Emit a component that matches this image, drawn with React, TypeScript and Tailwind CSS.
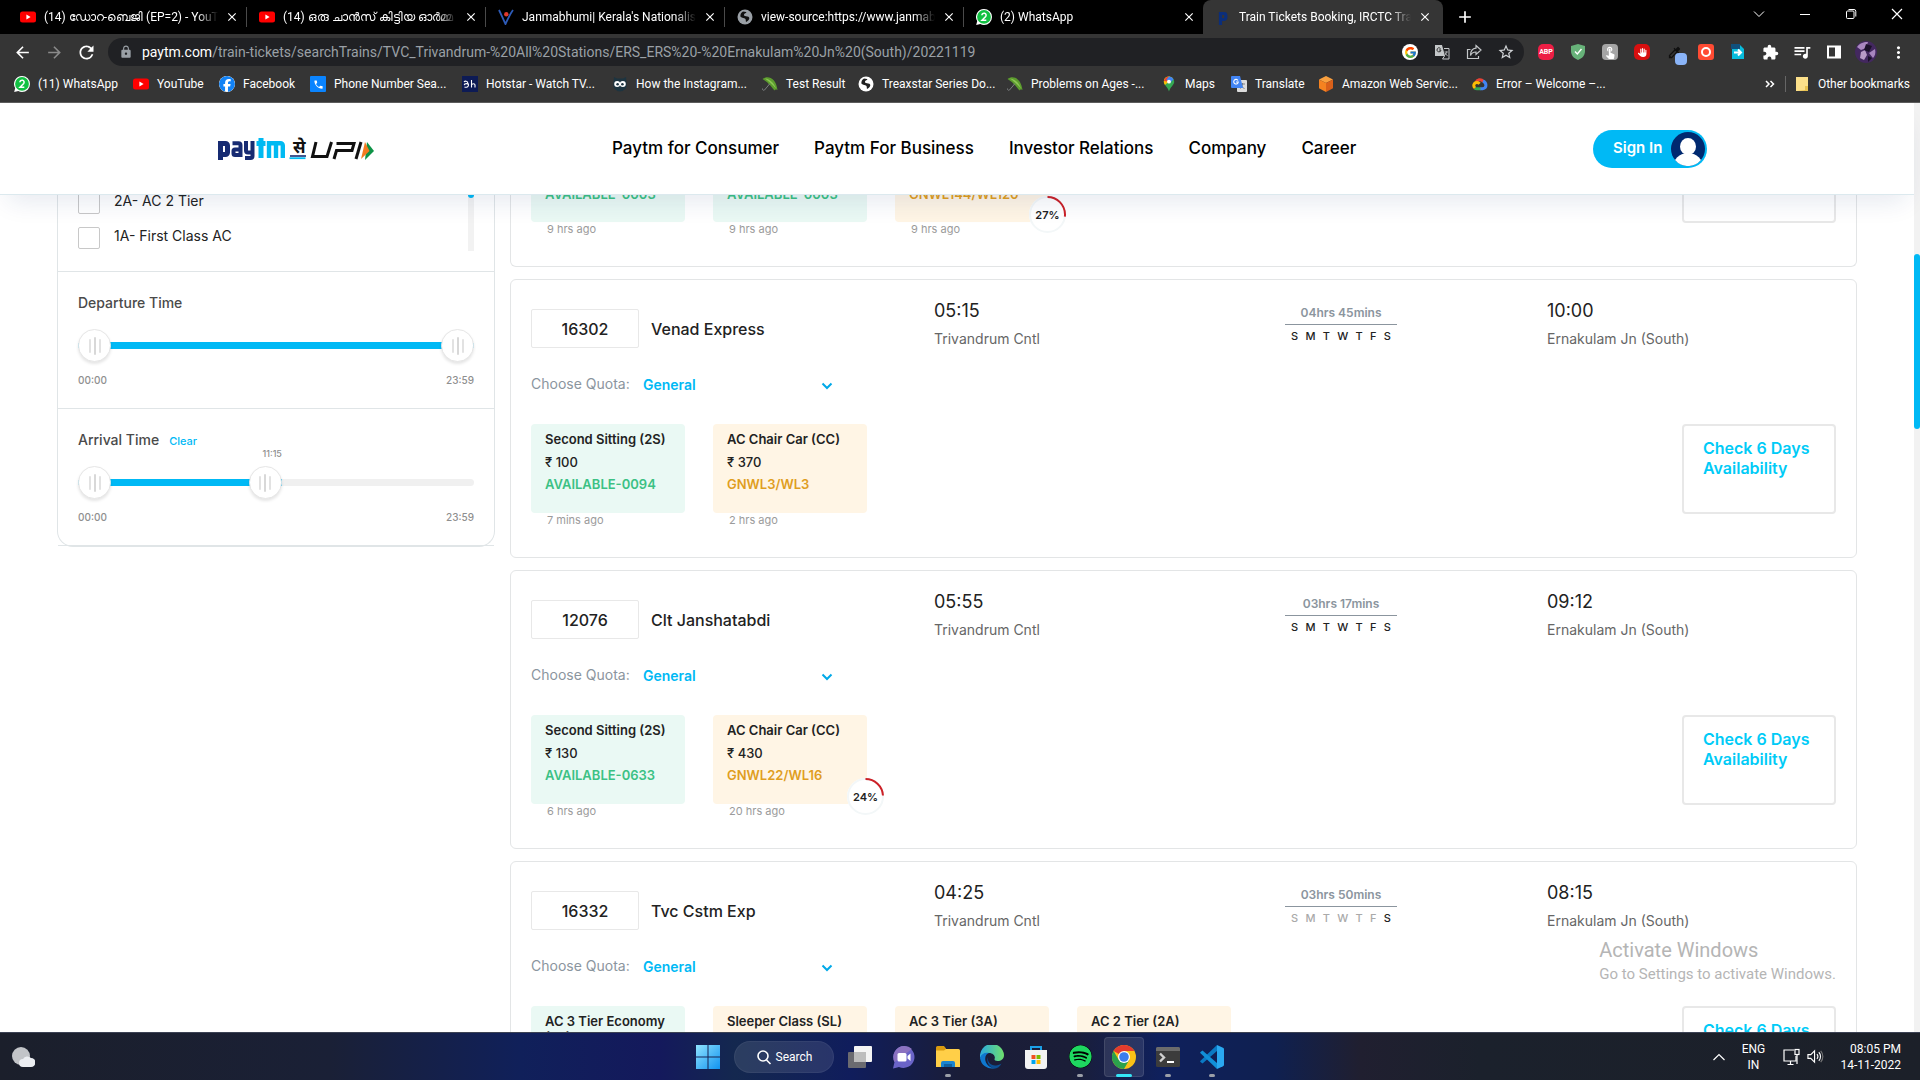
import React from "react";
import { FaFacebook, FaSpotify, FaHand } from "react-icons/fa6";
import { FcGoogle } from "react-icons/fc";
import {
  MdArrowBack,
  MdArrowForward,
  MdRefresh,
  MdLock,
  MdExtension,
  MdOutlineQueueMusic,
  MdTouchApp,
  MdMoreVert,
  MdStarBorder,
  MdAdd,
  MdClose,
  MdPhone,
  MdColorize,
} from "react-icons/md";

/* ---------- Small drawings ---------- */

function WhatsAppIcon() {
  return (
    <svg viewBox="0 0 16 16" className="size-4 shrink-0" aria-hidden="true">
      <path d="M8 0a8 8 0 0 1 0 16c-1.400 0-2.600-.3-3.700-.9L.2 16l1-3.900A8 8 0 0 1 8 0z" fill="#fff" />
      <circle cx="8" cy="7.900" r="6.900" fill="#12c143" />
      <path d="M5.900 6.300a2.100 2.100 0 1 1 3.800 1.200L6 11.300h4.300" fill="none" stroke="#fff" strokeWidth="1.500" />
    </svg>
  );
}

function YouTubeIcon() {
  return (
    <svg viewBox="0 0 16 16" className="size-4 shrink-0" aria-hidden="true">
      <rect x="0" y="2.500" width="16" height="11" rx="2.500" fill="#f00" />
      <path d="M6.400 5.600v4.800L10.600 8z" fill="#fff" />
    </svg>
  );
}

function JanmabhumiIcon() {
  return (
    <svg viewBox="0 0 16 16" className="size-4 shrink-0" aria-hidden="true">
      <path d="M1 1c2 4 4 9 6.500 14C10 10 12 5 15 1" fill="none" stroke="#2d5bb8" strokeWidth="1.800" />
      <circle cx="8.300" cy="5.300" r="2.200" fill="#e03a2c" />
    </svg>
  );
}

function GlobeIcon({ dim }: { dim?: boolean }) {
  return (
    <svg viewBox="0 0 16 16" className="size-4 shrink-0" aria-hidden="true">
      <circle cx="8" cy="8" r="7.500" fill={dim ? "#9aa0a6" : "#fff"} />
      <path
        d="M6 2.500c1.500.3 2.500 0 3.500.8-.6 1.200-2 1-2.500 2.200-.4 1 .8 1.500 2 1.700 1.800.3 3.500.6 3.300 2.300-.3 1.600-1.500 2.600-3.300 3.500-.5-1.200.2-2.300-.8-3.200-1-.8-3-.6-4.700-2C3 6 4 3.500 6 2.500z"
        fill={dim ? "#111" : "#222"}
      />
    </svg>
  );
}

function UmbrellaIcon() {
  return (
    <svg viewBox="0 0 16 16" className="size-4 shrink-0" aria-hidden="true">
      <path d="M.5 3C6-1 14 2 15.500 14c-1.500-.8-2.500-.6-3 .4C10 12 8.500 9 7 8.500 5.500 6 3 5 .5 3z" fill="#5c9c2e" />
      <path d="M3 2.500C8 3 12 7 14 12.500 10 8 7 5.500 3 2.500z" fill="#8cc653" />
      <path d="M8 7.500L2.500 14a1.300 1.300 0 0 1-2-1.500" fill="none" stroke="#7b7f80" strokeWidth="1" />
    </svg>
  );
}

function PhoneTile() {
  return (
    <span className="flex size-4 shrink-0 items-center justify-center rounded-[1px] bg-[#0a84ff] text-white">
      <MdPhone size={11} />
    </span>
  );
}

function HotstarTile() {
  return (
    <svg viewBox="0 0 16 16" className="size-4 shrink-0" aria-hidden="true">
      <rect width="16" height="16" fill="#0d1b55" />
      <path
        d="M2 6c1-1.300 3.500-1 3.500.5M2.200 9.200c.3-2 4-2 4.300-.3.200 1.800-2 2.800-4 2.100M6.500 9c0-1-.5-1.500-1-2.500M9.500 4v7.500M9.500 9c.5-1.700 3.500-1.700 3.500 0v2.500"
        fill="none"
        stroke="#fff"
        strokeWidth="1.100"
      />
    </svg>
  );
}

function OwlIcon() {
  return (
    <svg viewBox="0 0 16 16" className="size-4 shrink-0" aria-hidden="true">
      <path d="M2 1l3 1.500h6L14 1l.8 8A6.800 6.800 0 0 1 8 15.500 6.800 6.800 0 0 1 1.200 9z" fill="#1d3440" />
      <circle cx="5.200" cy="8" r="3" fill="#fff" />
      <circle cx="10.800" cy="8" r="3" fill="#fff" />
      <circle cx="5.600" cy="8.300" r="1.300" fill="#1d3440" />
      <circle cx="10.400" cy="8.300" r="1.300" fill="#1d3440" />
    </svg>
  );
}

function MapsPin() {
  return (
    <svg viewBox="0 0 16 16" className="size-4 shrink-0" aria-hidden="true">
      <path d="M8 .5A5.200 5.200 0 0 1 13.200 5.700c0 3.300-4 5.300-5.200 9.800C6.800 11 2.800 9 2.800 5.700A5.200 5.200 0 0 1 8 .5z" fill="#34a853" />
      <path d="M2.800 5.700c0 1.200.5 2.200 1.200 3.200L11.700 2A5.200 5.200 0 0 0 2.800 5.700z" fill="#fbbc04" />
      <path d="M4 2.400A5.200 5.200 0 0 1 8 .5L6 5.500 3 5C3 4 3.400 3 4 2.400z" fill="#ea4335" />
      <path d="M8 .5a5.200 5.200 0 0 1 4.600 2.800L9 7 5.500 3.500z" fill="#4285f4" />
      <circle cx="8" cy="5.700" r="1.900" fill="#fff" />
    </svg>
  );
}

function TranslateTile() {
  return (
    <svg viewBox="0 0 16 16" className="size-4 shrink-0" aria-hidden="true">
      <rect x="6" y="4" width="10" height="12" rx="1" fill="#dcdcdc" />
      <path d="M9 8h5M11.500 7v1c0 2-1 3.500-2.500 4.500M10 9c.5 1.500 2 3 3.500 3.500" stroke="#70757a" fill="none" strokeWidth=".9" />
      <path d="M1 0h8l3 12H1a1 1 0 0 1-1-1V1a1 1 0 0 1 1-1z" fill="#4285f4" />
      <path d="M7 4.500A2.300 2.300 0 1 0 7.300 6H5" fill="none" stroke="#fff" strokeWidth="1.100" />
    </svg>
  );
}

function AwsCube() {
  return (
    <svg viewBox="0 0 16 16" className="size-4 shrink-0" aria-hidden="true">
      <path d="M8 0l7 3.500L8 7 1 3.500z" fill="#f9a03f" />
      <path d="M1 3.500L8 7v9l-7-3.700z" fill="#f58220" />
      <path d="M15 3.500L8 7v9l7-3.700z" fill="#d9601a" />
    </svg>
  );
}

function CloudIcon() {
  return (
    <svg viewBox="0 0 16 16" className="size-4 shrink-0" aria-hidden="true" fill="none" strokeWidth="3">
      <path d="M4 6.500C5 3.500 9 2.500 11.300 5.500" stroke="#ea4335" />
      <path d="M11 5c3.500 1.500 4.500 7-.5 7.800H8" stroke="#4285f4" />
      <path d="M8.500 12.800H5c-1 0-1.700-.2-2.300-.7" stroke="#34a853" />
      <path d="M3 12C.8 10 1.800 6.500 5 6.500c1.200 0 2 .5 2.600 1.200" stroke="#fbbc04" />
    </svg>
  );
}

function PaytmFavicon() {
  return (
    <svg viewBox="0 0 16 16" className="size-4 shrink-0" aria-hidden="true">
      <path d="M5.500 16V4.500H9a1.800 1.800 0 0 1 1.800 1.800v2.400A1.800 1.800 0 0 1 9 10.500H6" fill="none" stroke="#0b2e7a" strokeWidth="3.200" />
    </svg>
  );
}

/* ---------- Browser chrome ---------- */

const tabs = [
  { title: "(14) ഡോറ-ബെജി (EP=2) - YouTube", icon: <YouTubeIcon /> },
  { title: "(14) ഒരു ചാൻസ് കിട്ടിയ ഓർമ്മ", icon: <YouTubeIcon /> },
  { title: "Janmabhumi| Kerala's Nationalist D", icon: <JanmabhumiIcon /> },
  { title: "view-source:https://www.janmabhumi", icon: <GlobeIcon dim /> },
  { title: "(2) WhatsApp", icon: <WhatsAppIcon /> },
  { title: "Train Tickets Booking, IRCTC Train T", icon: <PaytmFavicon />, active: true },
];

function TabStrip() {
  return (
    <div className="flex h-[34px] items-stretch bg-black pl-2">
      {tabs.map((t, i) => (
        <div
          key={t.title}
          className={
            t.active
              ? "flex w-[240px] items-center rounded-t-lg bg-[#353535] pr-1 pl-3"
              : "flex w-[239px] items-center pl-3"
          }
        >
          {t.icon}
          <span className="ml-2 flex-1 overflow-hidden text-xs whitespace-nowrap text-white [mask-image:linear-gradient(to_right,black_88%,transparent)]">
            {t.title}
          </span>
          <button aria-label={"Close tab " + (i + 1)} className="mx-[7px] text-white">
            <MdClose size={14} />
          </button>
          {!t.active && i < 4 && <span className="h-5 w-px bg-[#4a4a4a]" />}
        </div>
      ))}
      <button aria-label="New tab" className="ml-3 text-white">
        <MdAdd size={20} />
      </button>
      <div className="ml-auto flex h-7 items-center text-white">
        <button aria-label="Search tabs" className="flex w-[46px] justify-center">
          <svg viewBox="0 0 12 12" className="size-3" fill="none" stroke="currentColor">
            <path d="M1 3.500l5 5 5-5" />
          </svg>
        </button>
        <button aria-label="Minimize" className="flex w-[46px] justify-center">
          <svg viewBox="0 0 12 12" className="size-3" fill="none" stroke="currentColor">
            <path d="M1 6.500h10" />
          </svg>
        </button>
        <button aria-label="Restore" className="flex w-[46px] justify-center">
          <svg viewBox="0 0 12 12" className="size-3" fill="none" stroke="currentColor">
            <rect x="1.500" y="3" width="7.500" height="7.500" rx="1" />
            <path d="M3.500 1.500H9a1.800 1.800 0 0 1 1.800 1.800V8.500" />
          </svg>
        </button>
        <button aria-label="Close" className="flex w-[46px] justify-center">
          <svg viewBox="0 0 12 12" className="size-3" fill="none" stroke="currentColor" strokeWidth="1.200">
            <path d="M1 1l10 10M11 1L1 11" />
          </svg>
        </button>
      </div>
    </div>
  );
}

function ToolButton({ label, children }: { label: string; children: React.ReactNode }) {
  return (
    <button aria-label={label} className="flex h-7 w-8 items-center justify-center text-white">
      {children}
    </button>
  );
}

function Toolbar() {
  return (
    <div className="flex h-9 items-center bg-[#353535] pl-[6px]">
      <ToolButton label="Back">
        <MdArrowBack size={19} />
      </ToolButton>
      <ToolButton label="Forward">
        <MdArrowForward size={19} className="text-[#8a8a8a]" />
      </ToolButton>
      <ToolButton label="Reload">
        <MdRefresh size={21} />
      </ToolButton>
      <div className="ml-[6px] flex h-7 flex-1 items-center rounded-full bg-[#202124] pr-[2px] pl-[11px]">
        <MdLock size={14} className="text-[#9aa0a6]" />
        <div className="ml-[9px] flex-1 text-sm whitespace-nowrap text-[#9aa0a6]">
          <span className="text-white">paytm.com</span>
          /train-tickets/searchTrains/TVC_Trivandrum-%20All%20Stations/ERS_ERS%20-%20Ernakulam%20Jn%20(South)/20221119
        </div>
        <ToolButton label="Search with Google">
          <span className="flex size-4 items-center justify-center rounded-full bg-white">
            <FcGoogle size={13} />
          </span>
        </ToolButton>
        <ToolButton label="Translate this page">
          <svg viewBox="0 0 16 16" className="size-4" fill="none">
            <path d="M1 1h7l3 11H1z" fill="#c4c7c9" />
            <path d="M6.500 4.500A2 2 0 1 0 7 6H5" stroke="#333" />
            <path d="M10 4.500h5v10.500H8.500l2-3" stroke="#c4c7c9" />
            <path d="M10.500 8H14M12.500 7.500c0 2-1 3-2 4M11 9l2.500 3" stroke="#c4c7c9" strokeWidth=".8" />
          </svg>
        </ToolButton>
        <ToolButton label="Share">
          <svg viewBox="0 0 16 16" className="size-4" fill="none" stroke="#c4c7c9" strokeWidth="1.200">
            <path d="M4.500 5.500H1.500v9h11V12" />
            <path d="M10 1.500l5 4.500-5 4.500V8C7.500 8 5.500 9 4.500 11.500 4.500 7.500 6.500 4.500 10 4.200z" />
          </svg>
        </ToolButton>
        <ToolButton label="Bookmark this page">
          <MdStarBorder size={18} className="text-[#d0d3d6]" />
        </ToolButton>
      </div>
      <div className="ml-[6px] flex items-center pr-[6px]">
        <ToolButton label="Adblock Plus">
          <span className="flex size-4 items-center justify-center rounded-[5px] bg-[#ed1e45] text-[7px] font-bold">
            ABP
          </span>
        </ToolButton>
        <ToolButton label="Shield">
          <svg viewBox="0 0 16 16" className="size-4">
            <path d="M8 0l7 2v5c0 4.500-3 7.500-7 9-4-1.500-7-4.500-7-9V2z" fill="#67b279" />
            <path d="M5 7.500l2.300 2.500L11.500 5" stroke="#fff" strokeWidth="1.400" fill="none" />
          </svg>
        </ToolButton>
        <ToolButton label="Touch helper">
          <span className="flex size-4 items-center justify-center rounded-sm bg-[#a5a5a5]">
            <MdTouchApp size={14} />
          </span>
        </ToolButton>
        <ToolButton label="AdBlock">
          <span className="flex size-4 items-center justify-center rounded-[5px] bg-[#d80f0f]">
            <FaHand size={9} />
          </span>
        </ToolButton>
        <ToolButton label="Color picker">
          <span className="relative">
            <MdColorize size={15} className="text-[#101010]" />
            <span className="absolute top-2 left-2 size-3 rounded-sm bg-[#8ab4f8]" />
          </span>
        </ToolButton>
        <ToolButton label="Screen recorder">
          <span className="flex size-4 items-center justify-center rounded-[3px] bg-[#ff4b33]">
            <span className="size-[10px] rounded-full border-2 border-white" />
          </span>
        </ToolButton>
        <ToolButton label="Page export">
          <svg viewBox="0 0 16 16" className="size-4">
            <path d="M2 1h8l4 4v10H2z" fill="#08bcdc" />
            <path d="M1 0h9v5H1z" fill="#10507c" />
            <path d="M4 8.500h7M8 5.500l3 3-3 3" stroke="#fff" strokeWidth="2" fill="none" />
          </svg>
        </ToolButton>
        <ToolButton label="Extensions">
          <MdExtension size={17} />
        </ToolButton>
        <ToolButton label="Media">
          <MdOutlineQueueMusic size={20} />
        </ToolButton>
        <ToolButton label="Side panel">
          <svg viewBox="0 0 16 16" className="size-4">
            <path d="M1 1.500h14v13H1zM3 3.500v9h6v-9z" fill="#fff" fillRule="evenodd" />
          </svg>
        </ToolButton>
        <ToolButton label="Profile">
          <svg viewBox="0 0 22 22" className="size-[22px]">
            <circle cx="11" cy="11" r="11" fill="#43285f" />
            <path d="M2 6c4-5 8-5 11-5l-2 6-5 2zM14 12l6-4c1 4 0 7-2 9z" fill="#a886bf" />
            <path d="M6 11l4-2 2 5-3 5-4-2z" fill="#b99bc8" />
            <path d="M11 3l6 2-3 6-5-2zM13 15l4 2-4 4z" fill="#1a1028" />
          </svg>
        </ToolButton>
        <ToolButton label="Menu">
          <MdMoreVert size={19} />
        </ToolButton>
      </div>
    </div>
  );
}

const bookmarks = [
  { label: "(11) WhatsApp", icon: <WhatsAppIcon />, w: "w-[119px]" },
  { label: "YouTube", icon: <YouTubeIcon />, w: "w-[86px]" },
  { label: "Facebook", icon: <FaFacebook size={16} className="shrink-0 rounded-full bg-white text-[#1282f5]" />, w: "w-[91px]" },
  { label: "Phone Number Sea...", icon: <PhoneTile />, w: "w-[152px]" },
  { label: "Hotstar - Watch TV...", icon: <HotstarTile />, w: "w-[150px]" },
  { label: "How the Instagram...", icon: <OwlIcon />, w: "w-[150px]" },
  { label: "Test Result", icon: <UmbrellaIcon />, w: "w-[96px]" },
  { label: "Treaxstar Series Do...", icon: <GlobeIcon />, w: "w-[149px]" },
  { label: "Problems on Ages -...", icon: <UmbrellaIcon />, w: "w-[154px]" },
  { label: "Maps", icon: <MapsPin />, w: "w-[70px]" },
  { label: "Translate", icon: <TranslateTile />, w: "w-[87px]" },
  { label: "Amazon Web Servic...", icon: <AwsCube />, w: "w-[154px]" },
  { label: "Error – Welcome –...", icon: <CloudIcon />, w: "w-[150px]" },
];

function BookmarkBar() {
  return (
    <div className="flex h-[33px] items-center border-b border-[#5c5c5c] bg-[#353535] pb-1 pl-[14px] text-xs text-white">
      {bookmarks.map((b) => (
        <a key={b.label} href="#" className={"flex shrink-0 items-center gap-2 whitespace-nowrap " + b.w}>
          {b.icon}
          {b.label}
        </a>
      ))}
      <button aria-label="More bookmarks" className="ml-auto">
        <svg viewBox="0 0 10 8" className="h-2 w-[10px]" fill="none" stroke="#fff" strokeWidth="1.500">
          <path d="M1 1l3 3-3 3M5.500 1l3 3-3 3" />
        </svg>
      </button>
      <span className="mx-[10px] h-4 w-px bg-[#666]" />
      <a href="#" className="flex items-center gap-[10px] pr-[10px] whitespace-nowrap">
        <svg viewBox="0 0 12 14" className="h-[14px] w-3">
          <path d="M0 0h12v14H0z" fill="#fce08a" />
          <path d="M9 9h3v5H1l8-1z" fill="#e8c250" />
        </svg>
        Other bookmarks
      </a>
    </div>
  );
}

/* ---------- Paytm page ---------- */

const navItems = ["Paytm for Consumer", "Paytm For Business", "Investor Relations", "Company", "Career"];

function Logo() {
  return (
    <a href="#" aria-label="Paytm se UPI" className="flex h-6 w-[156px] items-center">
      <svg viewBox="0 0 156 24" className="h-6 w-[156px]">
        <g fill="none" strokeWidth="5">
          <g stroke="#172b72">
            <path d="M2.500 23V6.500h5a2 2 0 0 1 2 2v7a2 2 0 0 1-2 2H3" />
            <path d="M14.500 6.200h6a2 2 0 0 1 2 2V20" strokeWidth="4" />
            <path d="M22 18h-5a1.500 1.500 0 0 1-1.500-1.500V14a1.500 1.500 0 0 1 1.500-1.500h5" strokeWidth="4" />
            <path d="M28 4v9.500a2 2 0 0 0 2 2h4M34.500 4v15a2 2 0 0 1-2 2H27" strokeWidth="4" />
          </g>
          <g stroke="#00baf2">
            <path d="M43 1v20M38.500 6.500h9" />
            <path d="M51 21V6.200h11.500a2.300 2.300 0 0 1 2.300 2.300V21M58 6v15" strokeWidth="4.400" />
          </g>
        </g>
        <text x="75" y="16" fontSize="17" fontWeight="700" fill="#111" fontFamily="Noto Sans, sans-serif">
          से
        </text>
        <path d="M72 19h16" stroke="#172b72" strokeWidth="1.600" />
        <path d="M71.500 21.200h16" stroke="#00baf2" strokeWidth="1.800" />
        <g fill="none" stroke="#111" strokeWidth="3">
          <path d="M98 5l-3.500 14.500H109L113.500 5" />
          <path d="M116 22l2.500-8.500H134l2-7H118.500" />
          <path d="M143 5l-5 17" />
        </g>
        <path d="M149 5l7 9-9 9z" fill="#0e9347" />
        <path d="M147 5l4.500 9-8.500 8z" fill="#f47b20" />
      </svg>
    </a>
  );
}

function SiteHeader() {
  return (
    <header className="relative z-10 flex h-[92px] shrink-0 items-center border-b border-[#dce9ee] bg-white pl-[218px] shadow-[0_14px_26px_-8px_rgba(20,50,110,0.11)]">
      <Logo />
      <nav className="mb-[2px] ml-[238px] flex gap-[35px] text-[17px] leading-6 font-medium whitespace-nowrap text-black">
        {navItems.map((n) => (
          <a key={n} href="#">
            {n}
          </a>
        ))}
      </nav>
      <button className="mr-[207px] ml-auto flex h-[38px] w-[114px] items-center justify-between rounded-full bg-[#00b9f5] pr-[2px] pl-5 text-[15px] font-semibold whitespace-nowrap text-white">
        Sign In
        <svg viewBox="0 0 34 34" className="size-[34px]" aria-hidden="true">
          <circle cx="17" cy="17" r="17" fill="#002970" />
          <ellipse cx="17" cy="14.500" rx="8" ry="8.500" fill="#fff" />
          <path d="M4 28c3-4 6-6 9-6.500h8c3 .5 6 2.500 9 6.500a17 17 0 0 1-26 0z" fill="#fff" />
        </svg>
      </button>
    </header>
  );
}

function Handle() {
  return (
    <span className="flex size-[33px] items-center justify-center gap-[3px] rounded-full border border-[#e6e6e6] bg-white shadow-[0_2px_3px_rgba(0,0,0,0.1)]">
      <span className="h-[14px] w-[2px] rounded-full bg-[#e2e2e2]" />
      <span className="h-[18px] w-[2px] rounded-full bg-[#d8d8d8]" />
      <span className="h-[14px] w-[2px] rounded-full bg-[#e2e2e2]" />
    </span>
  );
}

function TimeFilter({ title, end, tip }: { title: string; end: number; tip?: string }) {
  return (
    <section className="border-b border-[#e0e5e7] px-5 pt-[21px] pb-[21px]">
      <h3 className="flex h-5 items-baseline gap-[10px] text-sm font-medium text-[#4a4a4a]">
        {title}
        {tip && <button className="text-[11px] font-medium text-[#00b9f5]">Clear</button>}
      </h3>
      <div className="relative mt-4 flex h-[33px] items-center">
        <div className="h-[7px] flex-1 overflow-hidden rounded-full bg-[#f0f0f0]">
          <div className="h-full bg-[#00b9f5]" style={{ width: end + "%" }} />
        </div>
        <div className="absolute inset-y-0 left-0 flex justify-between" style={{ width: end + "%" }}>
          <Handle />
          <span className="relative">
            <Handle />
            {tip && (
              <span className="absolute right-0 -top-[18px] text-[9px] leading-3 font-medium text-[#8f8f8f]">{tip}</span>
            )}
          </span>
        </div>
        <input type="range" aria-label={title + " from"} defaultValue={0} className="absolute inset-y-0 left-0 w-1/4 opacity-0" />
        <input type="range" aria-label={title + " to"} defaultValue={end} className="absolute inset-y-0 right-0 w-3/4 opacity-0" />
      </div>
      <div className="mt-[11px] flex justify-between text-[10px] leading-[14px] font-medium text-[#8f8f8f]">
        <span>00:00</span>
        <span>23:59</span>
      </div>
    </section>
  );
}

function Sidebar() {
  return (
    <aside className="w-[438px] shrink-0 self-start rounded-b-2xl border-x border-b border-[#e0e5e7]">
      <section className="flex h-[77px] justify-between border-b border-[#e0e5e7] px-5">
        <div className="-mt-[3px] flex flex-col gap-[13px]">
          {["2A- AC 2 Tier", "1A- First Class AC"].map((c) => (
            <label key={c} className="flex h-[22px] items-start text-sm leading-[18px] text-[#222]">
              <input type="checkbox" className="size-[22px] appearance-none rounded-xs border border-[#c8c8c8] bg-white" />
              <span className="ml-[14px]">{c}</span>
            </label>
          ))}
        </div>
        <div className="h-[56px] w-[6px] bg-[#f2f2f2]">
          <div className="h-[3px] rounded-b-full bg-[#00b9f5]" />
        </div>
      </section>
      <TimeFilter title="Departure Time" end={100} />
      <TimeFilter title="Arrival Time" end={51.500} tip="11:15" />
    </aside>
  );
}

type Fare = { cls?: string; price?: string; status?: string; ago?: string; chance?: number; ok?: boolean };
type Train = {
  no: string;
  name: string;
  dep: string;
  arr: string;
  dur: string;
  on: string;
  fares: Fare[];
};

const trains: Train[] = [
  {
    no: "16302",
    name: "Venad Express",
    dep: "05:15",
    arr: "10:00",
    dur: "04hrs 45mins",
    on: "1111111",
    fares: [
      { cls: "Second Sitting (2S)", price: "₹ 100", status: "AVAILABLE-0094", ago: "7 mins ago", ok: true },
      { cls: "AC Chair Car (CC)", price: "₹ 370", status: "GNWL3/WL3", ago: "2 hrs ago" },
    ],
  },
  {
    no: "12076",
    name: "Clt Janshatabdi",
    dep: "05:55",
    arr: "09:12",
    dur: "03hrs 17mins",
    on: "1111111",
    fares: [
      { cls: "Second Sitting (2S)", price: "₹ 130", status: "AVAILABLE-0633", ago: "6 hrs ago", ok: true },
      { cls: "AC Chair Car (CC)", price: "₹ 430", status: "GNWL22/WL16", ago: "20 hrs ago", chance: 24 },
    ],
  },
  {
    no: "16332",
    name: "Tvc Cstm Exp",
    dep: "04:25",
    arr: "08:15",
    dur: "03hrs 50mins",
    on: "0000001",
    fares: [
      { cls: "AC 3 Tier Economy (3E)", ok: true },
      { cls: "Sleeper Class (SL)" },
      { cls: "AC 3 Tier (3A)" },
      { cls: "AC 2 Tier (2A)" },
    ],
  },
];

function ChanceBadge({ value }: { value: number }) {
  return (
    <span className="absolute top-[63px] left-[134px] flex size-[37px] items-center justify-center rounded-full bg-white pt-[2px] text-[11px] font-semibold text-[#222]">
      <svg viewBox="0 0 37 37" className="absolute inset-0 size-[37px] -rotate-90" fill="none" strokeWidth="2">
        <circle cx="18.500" cy="18.500" r="17.500" stroke="#f3f7f8" />
        <circle cx="18.500" cy="18.500" r="17.500" stroke="#cc2127" pathLength={100} strokeDasharray={value + " 100"} />
      </svg>
      {value}%
    </span>
  );
}

function FareTile({ fare, partial }: { fare: Fare; partial?: boolean }) {
  return (
    <div className="w-[154px]">
      <div
        className={
          "relative h-[89px] rounded px-[14px] text-[13px] font-semibold text-[#222] " +
          (fare.ok ? "bg-[#eaf9f4] " : "bg-[#fff5e5] ") +
          (partial ? "pt-[53px]" : "pt-[7px]")
        }
      >
        {fare.cls && <div className="leading-4">{fare.cls}</div>}
        {fare.price && <div className="mt-[7px] leading-4 font-medium">{fare.price}</div>}
        {fare.status && (
          <div className={"leading-4 " + (fare.ok ? "text-[#3cc184]" : "text-[#e09e1f]") + (partial ? "" : " mt-[6px]")}>
            {fare.status}
          </div>
        )}
        {fare.chance && <ChanceBadge value={fare.chance} />}
      </div>
      <div className="h-[14px] pl-4 text-[11px] leading-[14px] text-[#9b9b9b]">{fare.ago}</div>
    </div>
  );
}

function FareRow({ fares, partial }: { fares: Fare[]; partial?: boolean }) {
  return (
    <div className="flex items-start gap-7">
      {fares.map((f, i) => (
        <FareTile key={i} fare={f} partial={partial} />
      ))}
      <button
        aria-label="Check 6 Days Availability"
        className="ml-auto h-[90px] w-[154px] rounded border-2 border-[#e8e8e8] px-[19px] pt-3 pb-[34px] text-left text-base leading-5 font-semibold text-[#00cbf7]"
      >
        {!partial && (
          <>
            Check 6 Days
            <br />
            Availability
          </>
        )}
      </button>
    </div>
  );
}

function TrainCard({ t }: { t: Train }) {
  return (
    <article className="h-[279px] shrink-0 rounded-md border border-[#e3e5e6] px-5 pt-[19px]">
      <div className="grid h-[50px] grid-cols-[403fr_351fr_262fr_289fr]">
        <div className="mt-[9px] flex items-center gap-3 text-base font-medium text-[#222]">
          <span className="flex h-[39px] w-[108px] shrink-0 items-center justify-center rounded-xs border border-[#e8e8e8]">
            {t.no}
          </span>
          {t.name}
        </div>
        <div>
          <div className="text-lg leading-6 text-[#222]">{t.dep}</div>
          <div className="mt-[6px] text-sm leading-5 text-[#666]">Trivandrum Cntl</div>
        </div>
        <div className="w-[112px] pt-[6px] text-center">
          <div className="border-b border-[#8b959e] pb-[3px] text-xs leading-4 font-semibold text-[#8b959e]">{t.dur}</div>
          <div className="mt-1 flex justify-between px-[6px] text-[11px] leading-[14px] font-medium">
            {"SMTWTFS".split("").map((d, i) => (
              <span key={i} className={t.on[i] === "1" ? "text-[#222]" : "text-[#aaa]"}>
                {d}
              </span>
            ))}
          </div>
        </div>
        <div>
          <div className="text-lg leading-6 text-[#222]">{t.arr}</div>
          <div className="mt-[6px] text-sm leading-5 text-[#666]">Ernakulam Jn (South)</div>
        </div>
      </div>
      <div className="mt-[25px] flex h-5 items-center text-sm">
        <label htmlFor={"quota-" + t.no} className="w-[112px] text-[#8b959e]">
          Choose Quota:
        </label>
        <div className="relative w-[191px] pt-[2px]">
          <select
            id={"quota-" + t.no}
            className="w-full appearance-none bg-transparent text-sm leading-5 font-semibold text-[#00b9f5]"
          >
            <option>General</option>
          </select>
          <svg viewBox="0 0 12 8" className="pointer-events-none absolute top-[9px] right-[1px] h-2 w-3" fill="none" stroke="#00a9e8" strokeWidth="2">
            <path d="M1.500 1.500L6 6l4.500-4.500" />
          </svg>
        </div>
      </div>
      <div className="mt-[30px]">
        <FareRow fares={t.fares} />
      </div>
    </article>
  );
}

function Results() {
  return (
    <main className="ml-[15px] flex flex-1 flex-col gap-3">
      <article className="-mt-[62px] shrink-0 rounded-b-md border-x border-b border-[#e3e5e6] px-5 pb-[30px]">
        <FareRow
          partial
          fares={[
            { status: "AVAILABLE-0003", ago: "9 hrs ago", ok: true },
            { status: "AVAILABLE-0003", ago: "9 hrs ago", ok: true },
            { status: "GNWL144/WL120", ago: "9 hrs ago", chance: 27 },
          ]}
        />
      </article>
      {trains.map((t) => (
        <TrainCard key={t.no} t={t} />
      ))}
    </main>
  );
}

/* ---------- Windows taskbar ---------- */

function TaskButton({ label, dot, active, children }: { label: string; dot?: boolean; active?: boolean; children: React.ReactNode }) {
  return (
    <button
      aria-label={label}
      className={
        "relative mx-[2px] flex size-10 items-center justify-center rounded " +
        (active ? "border border-white/10 bg-white/10" : "")
      }
    >
      {children}
      {dot && <span className="absolute bottom-0 h-[3px] w-[6px] rounded-full bg-[#9b9fa8]" />}
      {active && <span className="absolute -bottom-px h-[3px] w-4 rounded-full bg-[#35e6f7]" />}
    </button>
  );
}

function Taskbar() {
  return (
    <footer className="grid h-12 shrink-0 grid-cols-[1fr_auto_1fr] items-center border-t border-[#3c4254] bg-[linear-gradient(to_right,#1b1f2b_0px,#1a2036_330px,#10205a_520px,#14195c_660px,#14284f_735px,#101d5c_850px,#1a1d38_960px,#1b1e38_1070px,#0f205c_1160px,#0f2050_1275px,#201f30_1360px,#1b212c_1480px,#1c2029_100%)] text-xs text-white">
      <div className="pl-[11px]">
        <svg viewBox="0 0 24 22" className="h-[22px] w-6" aria-hidden="true">
          <circle cx="10" cy="10" r="9" fill="#c2c4c8" />
          <path d="M12 21a4 4 0 0 1 0-8 5 5 0 0 1 8-1 4.500 4.500 0 0 1 0 9z" fill="#eceef2" />
        </svg>
      </div>
      <div className="flex items-center">
        <TaskButton label="Start">
          <svg viewBox="0 0 24 24" className="size-6">
            <defs>
              <linearGradient id="win" x1="0" y1="0" x2="1" y2="1">
                <stop offset="0" stopColor="#8fe3ff" />
                <stop offset="1" stopColor="#1193f0" />
              </linearGradient>
            </defs>
            <path d="M0 0h11.500v11.500H0zM12.500 0H24v11.500H12.500zM0 12.500h11.500V24H0zM12.500 12.500H24V24H12.500z" fill="url(#win)" />
          </svg>
        </TaskButton>
        <button className="mx-1 flex h-8 w-[100px] items-center justify-center gap-1 rounded-full border border-white/5 bg-white/10 text-xs">
          <svg viewBox="0 0 16 16" className="size-4" fill="none" stroke="#fff" strokeWidth="1.600">
            <circle cx="7" cy="7" r="5" />
            <path d="M10.500 11l4 4" />
          </svg>
          Search
        </button>
        <TaskButton label="Task view">
          <svg viewBox="0 0 24 24" className="size-6">
            <rect x="6" y="1" width="18" height="16" rx="1" fill="#f4f4f4" />
            <rect x="0" y="7" width="18" height="16" rx="1" fill="#6b6b70" />
            <path d="M6 7h12v10H6z" fill="#bdbdbd" />
          </svg>
        </TaskButton>
        <TaskButton label="Chat">
          <svg viewBox="0 0 24 24" className="size-6">
            <path d="M12.500 1A11 11 0 1 1 7 22L1 23.500 2.500 17A11 11 0 0 1 12.500 1z" fill="#6a64c8" />
            <path d="M12.500 1A11 11 0 0 0 2.500 17L20 4a11 11 0 0 0-7.500-3z" fill="#8b72c0" />
            <rect x="5.500" y="8" width="9" height="8.500" rx="1.500" fill="#fff" />
            <path d="M15.500 11l3-2.500v7.500l-3-2.500z" fill="#fff" />
          </svg>
        </TaskButton>
        <TaskButton label="File Explorer" dot>
          <svg viewBox="0 0 24 24" className="size-6">
            <path d="M0 2.500A1.500 1.500 0 0 1 1.500 1H8l2 2.500V7H0z" fill="#d99a10" />
            <path d="M0 5.500h8L10 4h12.500A1.500 1.500 0 0 1 24 5.500V22H0z" fill="#ffcf48" />
            <path d="M5 22v-4a2 2 0 0 1 2-2h10a2 2 0 0 1 2 2v4z" fill="#1a84d0" />
            <path d="M8 19h8v3H8z" fill="#0f5f9f" />
          </svg>
        </TaskButton>
        <TaskButton label="Edge">
          <svg viewBox="0 0 24 24" className="size-6">
            <defs>
              <linearGradient id="edge" x1="0" y1="0" x2="1" y2="0">
                <stop offset="0" stopColor="#2aa9e0" />
                <stop offset="1" stopColor="#6fe06c" />
              </linearGradient>
            </defs>
            <path d="M0 12A12 12 0 0 1 24 10c0 4-3 6-6.500 6-2.500 0-3.500-1-2.800-2.500C15.500 11 13 8 9 8c-4 0-8 2-9 6z" fill="url(#edge)" />
            <path d="M0 13c1-4 5-6 9-5-3 1-4.500 4-3.500 8 1 4 5 7 9 7.200A12 12 0 0 1 0 13z" fill="#0f78cf" />
            <path d="M8 12c-1 5 3 9 8 8.500 2-.2 4-1 5.500-2-1.500 3-4 5-7.500 5.200C9 22 6 17 8 12z" fill="#0c4f94" />
          </svg>
        </TaskButton>
        <TaskButton label="Microsoft Store">
          <svg viewBox="0 0 24 24" className="size-6">
            <path d="M7 6V2h10v4" fill="none" stroke="#1ba0e6" strokeWidth="2" />
            <path d="M1 5h22v16a3 3 0 0 1-3 3H4a3 3 0 0 1-3-3z" fill="#f3f3f3" />
            <path d="M7.500 10H11.500v4h-4z" fill="#f25022" />
            <path d="M12.500 10h4v4h-4z" fill="#7fba00" />
            <path d="M7.500 15H11.500v4h-4z" fill="#00a4ef" />
            <path d="M12.500 15h4v4h-4z" fill="#ffb900" />
          </svg>
        </TaskButton>
        <TaskButton label="Spotify" dot>
          <FaSpotify size={23} className="rounded-full bg-black text-[#1ed760]" />
        </TaskButton>
        <TaskButton label="Chrome" active>
          <svg viewBox="0 0 24 24" className="size-6">
            <circle cx="12" cy="12" r="12" fill="#fbc116" />
            <path d="M12 12L1.600 6A12 12 0 0 1 22.400 6H12z" fill="#e33b2e" />
            <path d="M1.600 6A12 12 0 0 0 12 24l5.200-9L12 12 6.800 15z" fill="#2ba24c" />
            <circle cx="12" cy="12" r="6" fill="#fff" />
            <circle cx="12" cy="12" r="4.800" fill="#3b7ded" />
          </svg>
        </TaskButton>
        <TaskButton label="Terminal" dot>
          <svg viewBox="0 0 24 24" className="size-6">
            <rect x="0" y="2" width="24" height="20" rx="1.500" fill="#3c3c3c" />
            <path d="M0 3.500A1.500 1.500 0 0 1 1.500 2h21A1.500 1.500 0 0 1 24 3.500V6H0z" fill="#6c6c6c" />
            <path d="M4 8.500l4 4-4 4" stroke="#d0d0d0" strokeWidth="2.400" fill="none" />
            <path d="M11 17h7" stroke="#fff" strokeWidth="2" />
          </svg>
        </TaskButton>
        <TaskButton label="Visual Studio Code" dot>
          <svg viewBox="0 0 24 24" className="size-6">
            <path d="M17 0v6L2.500 18.500.5 17a.8.8 0 0 1 0-1.200z" fill="#0a79c4" />
            <path d="M17 24v-6L2.500 5.500.5 7a.8.8 0 0 0 0 1.200z" fill="#118fd8" />
            <path d="M17 0l6 2.700c.6.300 1 .8 1 1.500v15.600c0 .7-.4 1.200-1 1.500L17 24z" fill="#2aa8f0" />
          </svg>
        </TaskButton>
      </div>
      <div className="flex items-center justify-end pr-[19px] leading-4">
        <svg viewBox="0 0 12 8" className="h-2 w-3" fill="none" stroke="#fff" strokeWidth="1.200">
          <path d="M.5 7L6 1.500 11.500 7" />
        </svg>
        <span className="ml-4 w-6 text-center">
          ENG
          <br />
          IN
        </span>
        <svg viewBox="0 0 18 18" className="ml-[17px] size-[18px]" fill="none" stroke="#fff" strokeWidth="1.200">
          <path d="M12 2H2v11h12V8M5.500 16.500h6M8.500 13v3.500" />
          <rect x="13" y="1.500" width="4" height="5" />
          <path d="M15 6.500V16" />
        </svg>
        <svg viewBox="0 0 18 18" className="ml-[7px] size-[17px]" fill="none" stroke="#fff" strokeWidth="1.200">
          <path d="M1 7v4h3l4 4V3L4 7z" />
          <path d="M10.500 6.500a3.500 3.500 0 0 1 0 5M12.500 4.500a6.500 6.500 0 0 1 0 9" />
          <path d="M14.500 3a9 9 0 0 1 0 12" stroke="#777" />
        </svg>
        <span className="ml-4 text-right whitespace-nowrap">
          08:05 PM
          <br />
          14-11-2022
        </span>
      </div>
    </footer>
  );
}

export default function App() {
  return (
    <div className="relative flex h-screen flex-col overflow-hidden bg-white font-['Roboto','Noto_Sans',sans-serif]">
      <TabStrip />
      <Toolbar />
      <BookmarkBar />
      <div className="flex min-h-0 flex-1 bg-white font-['Inter',sans-serif]">
        <div className="flex min-w-0 flex-1 flex-col">
          <SiteHeader />
          <div className="flex min-h-0 flex-1 overflow-hidden px-[57px]">
            <Sidebar />
            <Results />
          </div>
        </div>
        <div className="w-[6px] bg-[#f2f2f2] pt-[151px]">
          <div className="h-[175px] rounded-full bg-[#00b9f5]" />
        </div>
      </div>
      <div className="pointer-events-none absolute right-[84px] bottom-24 text-[#b5b5b5]">
        <div className="text-xl leading-7">Activate Windows</div>
        <div className="text-[15px] leading-5">Go to Settings to activate Windows.</div>
      </div>
      <Taskbar />
    </div>
  );
}
